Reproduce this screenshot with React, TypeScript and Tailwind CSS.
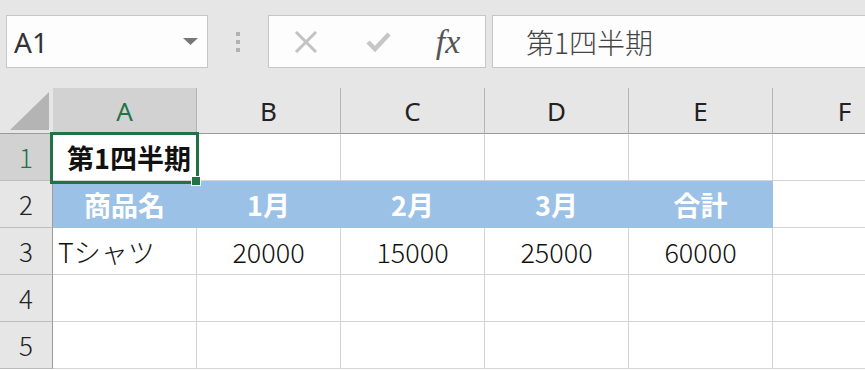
import React from "react";

const CJK = { fontFamily: '"Noto Sans CJK JP", "Noto Sans", sans-serif' };
const LAT = { fontFamily: '"Noto Sans", "Noto Sans CJK JP", sans-serif' };

const cols = ["A", "B", "C", "D", "E", "F"];

function ColHeader({ label, selected }: { label: string; selected?: boolean }) {
  return (
    <div
      className={`box-border h-[46px] flex items-center justify-center border-r border-b border-r-[#b4b4b4] border-b-[#9b9b9b] text-[26px] leading-none ${
        selected ? "bg-[#d2d2d2] text-[#217346]" : "bg-[#e6e6e6] text-[#222]"
      }`}
      style={LAT}
    >
      {label}
    </div>
  );
}

function RowHeader({ n, selected }: { n: number; selected?: boolean }) {
  return (
    <div
      className={`box-border h-[47px] flex items-center justify-center border-r border-b border-r-[#9b9b9b] border-b-[#bdbdbd] text-[26px] font-light leading-none ${
        selected ? "bg-[#d2d2d2] text-[#217346]" : "bg-[#e6e6e6] text-[#222]"
      }`}
      style={CJK}
    >
      {n}
    </div>
  );
}

function Cell({
  children,
  className = "",
}: {
  children?: React.ReactNode;
  className?: string;
}) {
  return (
    <div
      className={`box-border h-[47px] flex items-center border-r border-b border-[#d4d4d4] text-[27px] leading-none text-[#111] whitespace-nowrap overflow-visible ${className}`}
      style={CJK}
    >
      {children}
    </div>
  );
}

function BlueCell({ children }: { children?: React.ReactNode }) {
  return (
    <div
      className="box-border h-[47px] flex items-center justify-center bg-[#9bc2e6] border-r border-b border-[#9bc2e6] text-[27px] leading-none font-bold text-white"
      style={CJK}
    >
      {children}
    </div>
  );
}

export default function App() {
  return (
    <div className="w-[865px] h-[370px] overflow-hidden bg-white relative">
      {/* Formula bar area */}
      <div className="h-[88px] bg-[#e6e6e6] flex items-start pt-[15px] pl-[6px]">
        <div className="w-[202px] h-[53px] box-border bg-[#fdfdfd] border border-[#c6c6c6] flex items-center justify-between pl-[7px] pr-[9px]">
          <span className="text-[28px] leading-none text-[#333]" style={LAT}>
            A1
          </span>
          <svg width="15" height="7" viewBox="0 0 15 7">
            <path d="M0 0 L15 0 L7.5 7 Z" fill="#777" />
          </svg>
        </div>
        <div className="w-[60px] h-[53px] flex flex-col items-center justify-center gap-[4px]">
          <div className="w-[4px] h-[4px] bg-[#b2b2b2]" />
          <div className="w-[4px] h-[4px] bg-[#b2b2b2]" />
          <div className="w-[4px] h-[4px] bg-[#b2b2b2]" />
        </div>
        <div className="w-[218px] h-[53px] box-border bg-[#fdfdfd] border border-[#c6c6c6] flex items-center">
          <div className="w-[72px] flex justify-center pl-[2px]">
            <svg width="24" height="22" viewBox="0 0 24 22">
              <path d="M2 1 L22 21 M22 1 L2 21" stroke="#c3c3c3" strokeWidth="3" />
            </svg>
          </div>
          <div className="w-[72px] flex justify-center pl-[4px]">
            <svg width="26" height="22" viewBox="0 0 26 22">
              <path d="M2 11 L9 18 L23 3" stroke="#c6c6c6" strokeWidth="4.5" fill="none" />
            </svg>
          </div>
          <div className="flex-1 flex justify-center pr-[2px]">
            <span
              className="italic text-[34px] leading-none text-[#555]"
              style={{ fontFamily: '"Liberation Serif", "DejaVu Serif", serif' }}
            >
              fx
            </span>
          </div>
        </div>
        <div className="flex-1 ml-[6px] mr-[-4px] h-[53px] box-border bg-[#fdfdfd] border border-[#c6c6c6] flex items-center pl-[33px]">
          <span className="text-[28px] font-light leading-none text-[#444]" style={CJK}>
            第1四半期
          </span>
        </div>
      </div>

      {/* Grid */}
      <div className="relative">
        <div className="grid grid-cols-[53px_144px_144px_144px_144px_144px_144px]">
          {/* corner */}
          <div className="box-border h-[46px] bg-[#e6e6e6] border-b border-b-[#9b9b9b] flex items-end pl-[10px] pb-[3px] border-r-[3px] border-r-[#e6e6e6]">
            <svg width="39" height="38" viewBox="0 0 39 38">
              <path d="M0 38 L39 38 L39 0 Z" fill="#b4b4b4" />
            </svg>
          </div>
          {cols.map((c, i) => (
            <ColHeader key={c} label={c} selected={i === 0} />
          ))}

          {/* row 1 */}
          <RowHeader n={1} selected />
          <Cell className="pl-[14px] font-bold relative z-10">第1四半期</Cell>
          <Cell />
          <Cell />
          <Cell />
          <Cell />
          <Cell />

          {/* row 2 */}
          <RowHeader n={2} />
          <BlueCell>商品名</BlueCell>
          <BlueCell>1月</BlueCell>
          <BlueCell>2月</BlueCell>
          <BlueCell>3月</BlueCell>
          <BlueCell>合計</BlueCell>
          <Cell />

          {/* row 3 */}
          <RowHeader n={3} />
          <Cell className="pl-[5px] font-light">Tシャツ</Cell>
          <Cell className="justify-center font-light">20000</Cell>
          <Cell className="justify-center font-light">15000</Cell>
          <Cell className="justify-center font-light">25000</Cell>
          <Cell className="justify-center font-light">60000</Cell>
          <Cell />

          {/* row 4 */}
          <RowHeader n={4} />
          <Cell />
          <Cell />
          <Cell />
          <Cell />
          <Cell />
          <Cell />

          {/* row 5 */}
          <RowHeader n={5} />
          <Cell />
          <Cell />
          <Cell />
          <Cell />
          <Cell />
          <Cell />
        </div>

        {/* selection */}
        <div className="absolute left-[50px] top-[44px] w-[149px] h-[52px] border-[3px] border-[#217346] z-20 pointer-events-none" />
        <div className="absolute left-[191px] top-[88px] w-[10px] h-[10px] bg-[#217346] border border-white z-30" />
      </div>
    </div>
  );
}
